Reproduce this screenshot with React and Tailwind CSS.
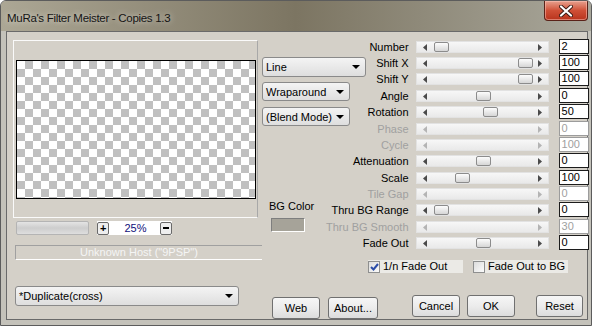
import React from 'react'

const sliders = [
  { label: 'Number', value: '2', thumb: 17, h: 'h-[16px]' },
  { label: 'Shift X', value: '100', thumb: 101, h: 'h-[16px]' },
  { label: 'Shift Y', value: '100', thumb: 101, h: 'h-[17px]' },
  { label: 'Angle', value: '0', thumb: 59, h: 'h-[16px]' },
  { label: 'Rotation', value: '50', thumb: 66, h: 'h-[17px]' },
  { label: 'Phase', value: '0', disabled: true, h: 'h-[16px]' },
  { label: 'Cycle', value: '100', disabled: true, h: 'h-[16px]' },
  { label: 'Attenuation', value: '0', thumb: 59, h: 'h-[17px]' },
  { label: 'Scale', value: '100', thumb: 38, h: 'h-[16px]' },
  { label: 'Tile Gap', value: '0', disabled: true, h: 'h-[16px]' },
  { label: 'Thru BG Range', value: '0', thumb: 17, h: 'h-[17px]' },
  { label: 'Thru BG Smooth', value: '30', disabled: true, h: 'h-[16px]' },
  { label: 'Fade Out', value: '0', thumb: 59, h: 'h-[16px]' },
]

function Arrow({ dir, disabled }) {
  const fill = disabled ? '#b4b4b4' : '#4a4a4a'
  return (
    <svg width="4" height="7" viewBox="0 0 4 7" className="shrink-0">
      {dir === 'left' ? (
        <polygon points="4,0 0,3.5 4,7" fill={fill} />
      ) : (
        <polygon points="0,0 4,3.5 0,7" fill={fill} />
      )}
    </svg>
  )
}

function Track({ thumb, disabled }) {
  return (
    <div className="mt-[2px] ml-[7px] w-[133px] h-[12px] shrink-0 border border-[#e2e2e2] bg-gradient-to-b from-[#f7f7f7] to-[#e9e9e9] flex items-center px-[6px]">
      <Arrow dir="left" disabled={disabled} />
      {thumb !== undefined && (
        <div
          className="w-[15px] h-[10px] shrink-0 rounded-[2px] border border-[#8c8c8c] bg-gradient-to-b from-[#fdfdfd] to-[#d6d6d6]"
          style={{ marginLeft: thumb - 10 }}
        />
      )}
      <div className="flex-1" />
      <Arrow dir="right" disabled={disabled} />
    </div>
  )
}

function Dropdown({ label, w, h }) {
  return (
    <div
      className={`${w} ${h} shrink-0 flex items-center justify-between pl-[3px] pr-[5px] rounded-[3px] border border-[#8a8a8a] bg-gradient-to-b from-[#f4f4f4] to-[#dedede] text-[11px] text-black whitespace-nowrap`}
    >
      <span className="leading-[12px]">{label}</span>
      <svg width="8" height="4" viewBox="0 0 8 4" className="shrink-0">
        <polygon points="0,0 8,0 4,4" fill="#000" />
      </svg>
    </div>
  )
}

function Button({ label, w, extra = '' }) {
  return (
    <div
      className={`${w} ${extra} h-[22px] shrink-0 flex items-center justify-center rounded-[3px] border border-[#707070] bg-gradient-to-b from-[#f6f6f6] via-[#ececec] to-[#dcdcdc] text-[11px] text-black whitespace-nowrap`}
    >
      <span className="leading-[12px]">{label}</span>
    </div>
  )
}

function Checkbox({ label, checked }) {
  return (
    <div className="w-[95px] h-[13px] flex items-center bg-[#ebeae6] whitespace-nowrap">
      <div className="w-[12px] h-[12px] shrink-0 border border-[#8e8f8f] bg-gradient-to-br from-[#dcdcdc] to-[#fbfbfb] flex items-center justify-center">
        {checked && (
          <svg width="9" height="8" viewBox="0 0 9 8">
            <path d="M1 4 L3.5 6.5 L8 1" fill="none" stroke="#2a4ca8" strokeWidth="2" />
          </svg>
        )}
      </div>
      <span className="ml-[3px] text-[11px] leading-[13px] text-black">{label}</span>
    </div>
  )
}

export default function App() {
  return (
    <div className="w-[592px] h-[326px] flex flex-col overflow-hidden bg-[#c4c2ba] border border-[#5c5c5c] rounded-t-[6px] font-['Liberation_Sans',Arial,sans-serif] select-none">
      {/* Title bar */}
      <div className="h-[30px] shrink-0 flex items-start justify-between bg-gradient-to-r from-[#aca795] via-[#7c7562] to-[#a9a79b]">
        <div className="pl-[6px] pt-[10px] text-[11.5px] leading-[14px] tracking-[-0.3px] text-[#141414] [text-shadow:0_0_6px_rgba(255,255,255,0.7)]">
          MuRa's Filter Meister - Copies 1.3
        </div>
        <div className="mr-[3px] w-[44px] h-[20px] flex items-center justify-center rounded-b-[4px] border border-t-0 border-[#5a2218] bg-gradient-to-b from-[#e6a08e] via-[#cf4f36] to-[#b8331c] shadow-[inset_0_0_0_1px_rgba(255,200,190,0.5)]">
          <svg width="14" height="12" viewBox="0 0 14 12">
            <path d="M2 1.5 L12 10.5 M12 1.5 L2 10.5" stroke="#3a1a14" strokeWidth="4" strokeLinecap="round" />
            <path d="M2 1.5 L12 10.5 M12 1.5 L2 10.5" stroke="#fff" strokeWidth="2.2" strokeLinecap="round" />
          </svg>
        </div>
      </div>

      {/* Client area */}
      <div className="flex-1 ml-[5px] mr-[3px] mb-[5px] border border-[#6a6a6a] bg-[#d4d0c8] flex text-[11px] text-black">
        {/* Left column */}
        <div className="w-[255px] shrink-0 pl-[6px] pt-[8px] flex flex-col">
          <div className="w-[245px] h-[178px] border border-[#fafafa] border-r-[#a8a8a8] border-b-[#fafafa] pl-[2px] pt-[19px]">
            <div className="w-[240px] h-[139px] border border-black bg-[conic-gradient(#c0c0c0_25%,#ffffff_0_50%,#c0c0c0_0_75%,#ffffff_0)] bg-[length:16px_16px]" />
          </div>

          <div className="mt-[3px] h-[14px] flex items-center">
            <div className="ml-[3px] w-[73px] h-[14px] rounded-[2px] border border-[#b4b4b4] bg-gradient-to-b from-[#e4e4e4] via-[#cdcdcd] to-[#dedede]" />
            <div className="ml-[8px] w-[75px] h-[14px] bg-white flex items-center">
              <div className="w-[13px] h-[13px] rounded-[2px] border border-[#6a6a6a] bg-[#eeeeee] flex items-center justify-center text-[11px] font-bold leading-none">+</div>
              <span className="ml-[15px] text-[11px] leading-[14px] text-[#10107a]">25%</span>
              <div className="ml-[14px] w-[12px] h-[13px] rounded-[2px] border border-[#6a6a6a] bg-[#eeeeee] flex items-center justify-center">
                <div className="w-[6px] h-[2px] bg-black" />
              </div>
            </div>
          </div>

          <div className="mt-[10px] ml-[2px] w-[247px] h-[15px] border border-[#a0a0a0] border-r-0 border-b-white text-center text-[11px] leading-[12px] text-[#f5f5f5] whitespace-nowrap">
            Unknown Host ("9PSP")
          </div>

          <div className="mt-[26px] ml-[2px]">
            <Dropdown label="*Duplicate(cross)" w="w-[224px]" h="h-[20px]" />
          </div>
        </div>

        {/* Right area */}
        <div className="flex-1 flex flex-col">
          <div className="flex">
            {/* Middle column */}
            <div className="w-[64px] shrink-0 pt-[25px] flex flex-col">
              <Dropdown label="Line" w="w-[104px]" h="h-[20px]" />
              <div className="mt-[5px]">
                <Dropdown label="Wraparound" w="w-[88px]" h="h-[19px]" />
              </div>
              <div className="mt-[6px]">
                <Dropdown label="(Blend Mode)" w="w-[88px]" h="h-[19px]" />
              </div>
              <div className="mt-[74px] ml-[7px] whitespace-nowrap text-[11px] leading-[13px]">BG Color</div>
              <div className="mt-[5px] ml-[9px] w-[34px] h-[14px] border border-[#7e7e7e] border-r-white border-b-white bg-[#a6a399]" />
            </div>

            {/* Sliders */}
            <div className="flex-1 pt-[7px] flex flex-col">
              {sliders.map((s) => (
                <div key={s.label} className={`${s.h} flex items-start`}>
                  <div className={`flex-1 text-right whitespace-nowrap leading-[16px] ${s.disabled ? 'text-[#a0a0a0]' : 'text-black'}`}>
                    {s.label}
                  </div>
                  <Track thumb={s.thumb} disabled={s.disabled} />
                  <div
                    className={`ml-[10px] w-[30px] h-[15px] shrink-0 bg-white border pl-[2px] leading-[13px] ${s.disabled ? 'border-[#9c9c9c] text-[#a0a0a0]' : 'border-[#1c1c1c] text-black'}`}
                  >
                    {s.value}
                  </div>
                  <div className="w-[2px] shrink-0" />
                </div>
              ))}
            </div>
          </div>

          {/* Checkboxes */}
          <div className="mt-[9px] pl-[106px] flex">
            <Checkbox label="1/n Fade Out" checked />
            <div className="ml-[10px]">
              <Checkbox label="Fade Out to BG" />
            </div>
          </div>

          {/* Buttons */}
          <div className="mt-[22px] pl-[10px] flex items-start">
            <Button label="Web" w="w-[48px]" extra="mt-[2px]" />
            <Button label="About..." w="w-[50px]" extra="mt-[2px] ml-[8px]" />
            <Button label="Cancel" w="w-[48px]" extra="ml-[34px]" />
            <Button label="OK" w="w-[48px]" extra="ml-[7px]" />
            <Button label="Reset" w="w-[47px]" extra="ml-[21px]" />
          </div>
        </div>
      </div>
    </div>
  )
}
